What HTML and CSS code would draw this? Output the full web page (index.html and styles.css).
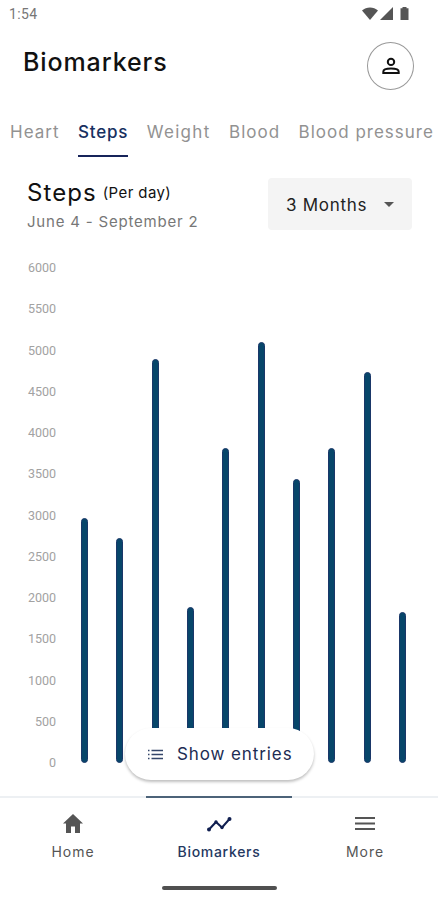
FILE: index.html
```html
<!DOCTYPE html>
<html lang="en">
<head>
<meta charset="UTF-8">
<meta name="viewport" content="width=device-width, initial-scale=1.0">
<title>Biomarkers</title>
<link rel="stylesheet" href="styles.css">
</head>
<body>

<div class="status-bar">
  <span class="time">1:54</span>
  <svg class="status-icons" width="48" height="14" viewBox="0 0 48 14">
    <path d="M0 3.5C4.5-.4 11.500-.4 16 3.500L8 13z"/>
    <path d="M31 0v13H18z"/>
    <path d="M40.500 0h4v1.300h2V13h-8V1.300h2z"/>
  </svg>
</div>

<header class="header">
  <h1>Biomarkers</h1>
  <button class="profile" aria-label="Profile">
    <svg width="18" height="18" viewBox="0 0 18 18">
      <circle cx="9" cy="4.900" r="3.200"/>
      <path d="M1.300 16v-1.300c0-2.200 4-3.200 7.700-3.200s7.700 1 7.700 3.200V16z"/>
    </svg>
  </button>
</header>

<nav class="tabs">
  <a class="tab tab-heart">Heart</a>
  <a class="tab tab-steps active">Steps</a>
  <a class="tab tab-weight">Weight</a>
  <a class="tab tab-blood">Blood</a>
  <a class="tab tab-pressure">Blood pressure</a>
</nav>

<section class="summary">
  <div>
    <h2>Steps <small>(Per day)</small></h2>
    <p class="dates">June 4 - September 2</p>
  </div>
  <button class="range">
    <span>3 Months</span>
    <svg width="10" height="5" viewBox="0 0 10 5"><path d="M0 0h10L5 5z"/></svg>
  </button>
</section>

<main class="chart">
  <div class="axis">
    <span>6000</span>
    <span>5500</span>
    <span>5000</span>
    <span>4500</span>
    <span>4000</span>
    <span>3500</span>
    <span>3000</span>
    <span>2500</span>
    <span>2000</span>
    <span>1500</span>
    <span>1000</span>
    <span>500</span>
    <span>0</span>
  </div>
  <div class="bars">
    <div class="bar" style="height: 49.5%"></div>
    <div class="bar" style="height: 45.4%"></div>
    <div class="bar" style="height: 81.7%"></div>
    <div class="bar" style="height: 31.6%"></div>
    <div class="bar" style="height: 63.6%"></div>
    <div class="bar" style="height: 85%"></div>
    <div class="bar" style="height: 57.4%"></div>
    <div class="bar" style="height: 63.7%"></div>
    <div class="bar" style="height: 78.9%"></div>
    <div class="bar" style="height: 30.5%"></div>
  </div>
  <button class="entries">
    <svg width="15" height="11" viewBox="0 0 15 11">
      <path d="M0 1.500h1.500M3.500 1.500H15M0 5.500h1.500M3.500 5.500H15M0 9.500h1.500M3.500 9.500H15"/>
    </svg>
    <span>Show entries</span>
  </button>
</main>

<nav class="bottom-nav">
  <a class="item item-home">
    <svg width="20" height="20" viewBox="0 0 20 20">
      <path class="fill" d="M10 0l10 9.500h-3V19h-5v-6.500H8V19H3V9.500H0z"/>
    </svg>
    <span>Home</span>
  </a>
  <a class="item item-bio active">
    <svg width="26" height="20" viewBox="0 0 26 20">
      <path class="line" d="M3 15.500l7-7.500 6 5.500 7.500-8.500"/>
      <circle class="fill" cx="3" cy="15.500" r="2"/>
      <circle class="fill" cx="10" cy="8" r="1.700"/>
      <circle class="fill" cx="16" cy="13.500" r="1.700"/>
      <circle class="fill" cx="23.500" cy="5" r="2"/>
    </svg>
    <span>Biomarkers</span>
  </a>
  <a class="item item-more">
    <svg width="20" height="20" viewBox="0 0 20 20">
      <path class="line" d="M0 4h20M0 9.500h20M0 15h20"/>
    </svg>
    <span>More</span>
  </a>
</nav>
<div class="handle"></div>

</body>
</html>
```
FILE: styles.css
```css
* {
  box-sizing: border-box;
}
body {
  margin: 0;
  height: 900px;
  overflow: hidden;
  display: flex;
  flex-direction: column;
  background-color: #fff;
  font-family: Inter, "Open Sans", sans-serif;
  color: #111;
}
h1, h2, p {
  margin: 0;
}
button {
  padding: 0;
  border: none;
  font-family: inherit;
}
.status-bar {
  display: flex;
  justify-content: space-between;
  align-items: center;
  height: 28px;
  padding: 0 28px 0 9px;
}
.time {
  font-family: Roboto, sans-serif;
  font-size: 14px;
  letter-spacing: 0.4px;
  color: #777;
}
.status-icons {
  fill: #555;
}
.header {
  display: flex;
  justify-content: space-between;
  height: 72px;
  padding: 14px 24px 0 23px;
}
h1 {
  font-size: 25px;
  line-height: 40px;
  font-weight: 500;
  letter-spacing: 0.9px;
}
.profile {
  display: flex;
  justify-content: center;
  align-items: center;
  width: 47px;
  height: 48px;
  border: 1px solid #999;
  border-radius: 50%;
  background-color: #fff;
}
.profile svg {
  fill: none;
  stroke: #111;
  stroke-width: 2;
}
.tabs {
  display: flex;
  gap: 18.5px;
  height: 58px;
  padding: 16px 0 0 10px;
  white-space: nowrap;
}
.tab {
  height: 41px;
  border-bottom: 2px solid transparent;
  font-size: 17px;
  line-height: 32px;
  letter-spacing: 1px;
  color: #929292;
}
.tab.active {
  border-color: #17245a;
  font-weight: 500;
  letter-spacing: 0.8px;
  color: #17305f;
}
.tab-weight {
  letter-spacing: 1.3px;
}
.summary {
  display: flex;
  justify-content: space-between;
  height: 88px;
  padding: 20px 26px 0 27px;
}
h2 {
  font-size: 24px;
  line-height: 30px;
  font-weight: 400;
  letter-spacing: 1.1px;
}
h2 small {
  font-size: 15px;
  letter-spacing: 0.4px;
  margin-left: -2px;
  vertical-align: 3px;
}
.dates {
  font-size: 15px;
  line-height: 27px;
  letter-spacing: 0.8px;
  color: #777;
}
.range {
  display: flex;
  justify-content: space-between;
  align-items: center;
  width: 144px;
  height: 52px;
  padding: 1px 18px 0;
  border-radius: 4px;
  background-color: #f4f4f4;
  font-size: 17px;
  letter-spacing: 0.7px;
  color: #222;
}
.range svg {
  fill: #555;
}
.chart {
  position: relative;
  display: flex;
  height: 550px;
  padding: 22px 32px 33px 27px;
}
.axis {
  display: flex;
  flex-direction: column;
  justify-content: space-between;
  width: 29px;
  margin: -8px 0;
  font-family: Roboto, sans-serif;
  font-size: 12.5px;
  line-height: 16px;
  text-align: right;
  color: #a2a2a2;
}
.bars {
  flex: 1;
  display: flex;
  justify-content: space-between;
  align-items: flex-end;
  margin-left: 25px;
}
.bar {
  width: 7px;
  border-radius: 4px;
  background-color: #07466a;
  border: 1px solid #1a3768;
}
/* floats over the bottom of the bars */
.entries {
  position: absolute;
  left: 125px;
  bottom: 16px;
  display: flex;
  align-items: center;
  gap: 14px;
  width: 189px;
  height: 52px;
  padding-left: 23px;
  border-radius: 26px;
  background-color: #fff;
  box-shadow: 0 2px 3px rgba(0, 0, 0, 0.25);
  font-size: 17px;
  letter-spacing: 0.9px;
  white-space: nowrap;
  color: #1c2c53;
}
.entries svg {
  stroke: #34466a;
  stroke-width: 1.4;
}
.bottom-nav {
  display: flex;
  height: 90px;
}
.item {
  flex: 1;
  display: flex;
  flex-direction: column;
  align-items: center;
  padding-top: 16px;
  border-top: 2px solid #edf0f3;
  font-size: 14px;
  line-height: 18px;
  letter-spacing: 1px;
  color: #555;
}
.item svg {
  margin-bottom: 9px;
}
.item.active {
  border-color: #4c6379;
  font-weight: 500;
  letter-spacing: 0.7px;
  color: #25385f;
}
.item .fill {
  fill: currentColor;
}
.item .line {
  fill: none;
  stroke: currentColor;
  stroke-width: 2;
}
.item.active svg {
  color: #101f50;
}
.handle {
  width: 115px;
  height: 4px;
  margin: 0 auto;
  border-radius: 2px;
  background-color: #505050;
}
```
